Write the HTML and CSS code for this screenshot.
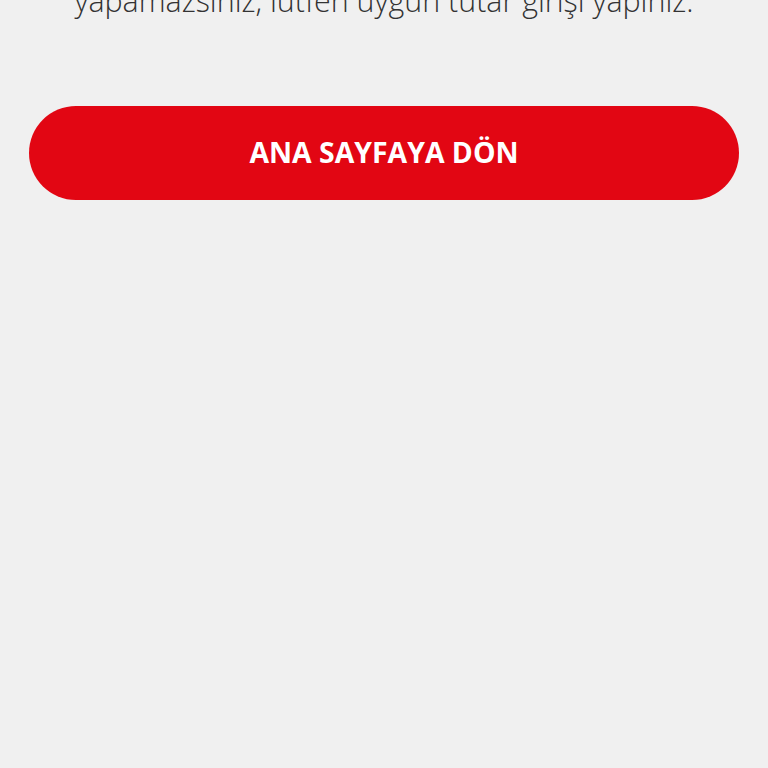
FILE: index.html
```html
<!DOCTYPE html>
<html lang="tr">

<head>
    <meta charset="UTF-8">
    <meta name="viewport" content="width=device-width, initial-scale=1.0">
    <title>Hata</title>
    <link rel="stylesheet" href="styles.css">
</head>

<body>
    <div class="container">
        <p class="message">yapamazsınız, lütfen uygun tutar girişi yapınız.</p>
        <button type="button" class="home-btn">ANA SAYFAYA DÖN</button>
    </div>
</body>

</html>
```

FILE: styles.css
```css
body {
    background: #f0f0f0;
    font-family: "Open Sans", Arial, sans-serif;
    margin: 0;
    color: #333;
}

.container {
    display: flex;
    flex-direction: column;
    padding: 0 29px;
}

/* only the last line of the message is visible */
.message {
    margin: -19px 0 0;
    font-size: 30.4px;
    font-weight: 300;
    line-height: 40px;
    text-align: center;
    white-space: nowrap;
    color: #333;
}

.home-btn {
    margin-top: 85px;
    height: 94px;
    padding-bottom: 3px;
    border: none;
    border-radius: 47px;
    background: #e20613;
    color: #ffffff;
    font-family: "Open Sans", Arial, sans-serif;
    font-size: 28.4px;
    font-weight: 700;
    cursor: pointer;
}
```
